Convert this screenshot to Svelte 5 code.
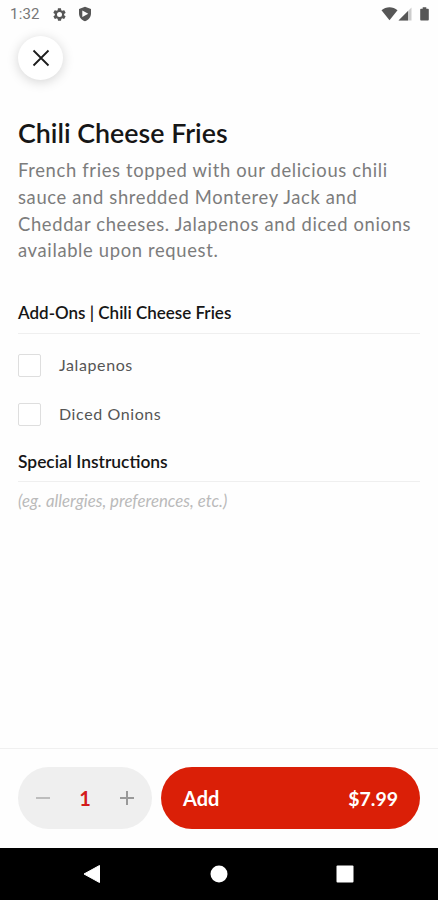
<script lang="ts">
  type AddOn = { name: string; checked: boolean };

  let addOns = $state<AddOn[]>([
    { name: 'Jalapenos', checked: false },
    { name: 'Diced Onions', checked: false },
  ]);
  let instructions = $state('');
  let quantity = $state(1);

  const price = 7.99;
  let total = $derived((price * quantity).toFixed(2));
</script>

<div class="screen">
  <div class="status-bar">
    <span class="clock">1:32</span>
    <svg class="gear" width="15" height="15" viewBox="0 0 24 24">
      <path fill-rule="evenodd" d="M19.4 13c.1-.7.1-1.300 0-2l2.100-1.600c.2-.2.300-.4.1-.7l-2-3.400c-.1-.3-.4-.3-.6-.3l-2.500 1c-.5-.4-1.100-.7-1.700-1l-.4-2.600c0-.3-.2-.4-.5-.4h-4c-.3 0-.5.1-.5.4L9.100 5c-.6.3-1.200.6-1.700 1l-2.500-1c-.2 0-.5 0-.6.3l-2 3.400c-.1.3 0 .5.1.7L4.600 11c-.1.700-.1 1.300 0 2l-2.200 1.600c-.1.2-.2.4-.1.700l2 3.400c.1.3.4.3.6.3l2.500-1c.5.4 1.100.7 1.700 1l.4 2.600c0 .3.2.4.5.4h4c.3 0 .5-.1.5-.4l.4-2.600c.6-.3 1.200-.6 1.700-1l2.500 1c.2 0 .5 0 .6-.3l2-3.400c.2-.3.1-.5-.1-.7zM12 16a4 4 0 1 1 0-8 4 4 0 0 1 0 8z" />
    </svg>
    <svg class="shield" width="16" height="16" viewBox="0 0 16 16">
      <path fill-rule="evenodd" d="M8 .8 14 3v4.600c0 3.600-2.400 6.500-6 7.700-3.600-1.200-6-4.100-6-7.700V3zM5.300 4.500v6.600L11.300 7.800z" />
    </svg>
    <div class="signals">
      <svg width="17" height="14" viewBox="0 0 17 14">
        <path d="M.5 3.200C5-.7 12-.7 16.500 3.200L8.500 13.300z" />
      </svg>
      <svg width="14" height="14" viewBox="0 0 14 14">
        <path class="faint" d="M13.500.5v13H.5z" />
        <path d="M10 4v9.500H.5z" />
      </svg>
      <svg class="battery" width="9" height="14" viewBox="0 0 9 14">
        <path d="M2.700.3h3.600v1.500h1.700q.8 0 .8.800v10q0 1-.8 1H1q-.8 0-.8-1v-10q0-.8.8-.8h1.700z" />
      </svg>
    </div>
  </div>

  <button class="close" aria-label="Close">
    <svg width="18" height="18" viewBox="0 0 18 18">
      <path d="M1.500 1.500l15 15M16.500 1.500l-15 15" />
    </svg>
  </button>

  <main>
    <h1>Chili Cheese Fries</h1>
    <p class="description">
      French fries topped with our delicious chili sauce and shredded Monterey Jack and Cheddar
      cheeses. Jalapenos and diced onions available upon request.
    </p>

    <h2>Add-Ons | Chili Cheese Fries</h2>
    <div class="add-ons">
      {#each addOns as addOn}
        <label>
          <input type="checkbox" bind:checked={addOn.checked} />
          <span>{addOn.name}</span>
        </label>
      {/each}
    </div>

    <h2 class="special">Special Instructions</h2>
    <input
      class="instructions"
      type="text"
      placeholder="(eg. allergies, preferences, etc.)"
      bind:value={instructions}
    />
  </main>

  <footer>
    <div class="stepper">
      <button class="minus" aria-label="Remove one" onclick={() => (quantity = Math.max(1, quantity - 1))}>
        <svg width="14" height="14" viewBox="0 0 14 14"><path d="M0 7h14" /></svg>
      </button>
      <span class="quantity">{quantity}</span>
      <button class="plus" aria-label="Add one" onclick={() => (quantity += 1)}>
        <svg width="14" height="14" viewBox="0 0 14 14"><path d="M0 7h14M7 0v14" /></svg>
      </button>
    </div>
    <button class="add">
      <span>Add</span>
      <span class="total">${total}</span>
    </button>
  </footer>

  <nav>
    <svg width="18" height="20" viewBox="0 0 18 20">
      <path stroke="#fff" stroke-linejoin="round" d="M16.500 1.500v17L1 10z" />
    </svg>
    <svg width="18" height="20" viewBox="0 0 18 20">
      <circle cx="9" cy="10" r="8.500" />
    </svg>
    <svg width="18" height="20" viewBox="0 0 18 20">
      <rect x=".5" y="1.500" width="17" height="17" rx="1" />
    </svg>
  </nav>
</div>

<style>
  :global(body) {
    background: #fefefe;
  }

  .screen {
    display: flex;
    flex-direction: column;
    width: 438px;
    height: 900px;
    overflow: hidden;
    background: #fefefe;
    color: #161616;
    font-family: Lato, "Liberation Sans", sans-serif;
  }

  button {
    padding: 0;
    border: none;
    background: none;
    font-family: inherit;
    cursor: pointer;
  }

  svg {
    display: block;
    flex: none;
  }

  .status-bar {
    display: flex;
    align-items: center;
    height: 28px;
    padding: 0 9px 0 10px;
    fill: #565656;
  }

  .clock {
    width: 42px;
    color: #777;
    font-family: Roboto, sans-serif;
    font-size: 15px;
    letter-spacing: 0.2px;
  }

  .shield {
    margin-left: 10px;
  }

  .signals {
    display: flex;
    margin-left: auto;
  }

  .battery {
    margin-left: 8px;
  }

  .faint {
    fill: #ccc;
  }

  .close {
    display: flex;
    align-items: center;
    justify-content: center;
    flex: none;
    width: 45px;
    height: 44px;
    margin: 8px 0 0 18px;
    border-radius: 50%;
    background: #fff;
    box-shadow: 0 2px 12px rgba(0, 0, 0, 0.17);
  }

  .close path {
    stroke: #1c1c1c;
    stroke-width: 1.8;
  }

  main {
    flex: 1;
    padding: 37px 18px 0;
  }

  h1 {
    margin: 0;
    font-size: 26.8px;
    font-weight: 600;
    line-height: 32px;
  }

  .description {
    margin: 8px 0 0;
    color: #7c7c7c;
    font-size: 18.4px;
    line-height: 26.8px;
    letter-spacing: 0.65px;
  }

  h2 {
    margin: 0;
    padding-bottom: 10px;
    border-bottom: 1px solid #efefef;
    font-size: 17px;
    font-weight: 600;
    line-height: 20px;
  }

  .description + h2 {
    margin-top: 39px;
  }

  .special {
    padding-bottom: 9px;
    font-size: 17.4px;
  }

  .add-ons {
    display: flex;
    flex-direction: column;
    gap: 26px;
    padding: 20px 0 26px;
  }

  label {
    display: flex;
    align-items: center;
    gap: 18px;
    color: #555;
    font-size: 16px;
    letter-spacing: 0.6px;
  }

  label span {
    padding-bottom: 2px;
    line-height: 21px;
  }

  label input {
    appearance: none;
    width: 23px;
    height: 23px;
    margin: 0;
    border: 1px solid #dedede;
    border-radius: 2px;
    background: #fff;
  }

  label input:checked {
    background: #da1f07;
  }

  .instructions {
    display: block;
    box-sizing: border-box;
    width: 100%;
    height: 37px;
    padding: 0;
    border: none;
    outline: none;
    background: none;
    font-family: inherit;
    font-size: 16.8px;
    font-style: italic;
  }

  .instructions::placeholder {
    color: #bababa;
  }

  footer {
    display: flex;
    gap: 9px;
    box-sizing: border-box;
    height: 100px;
    padding: 18px 18px 19px;
    border-top: 1px solid #f0f0f0;
  }

  .stepper {
    display: flex;
    align-items: center;
    justify-content: space-between;
    box-sizing: border-box;
    width: 134px;
    height: 62px;
    padding: 0 18px;
    border-radius: 31px;
    background: #efefef;
  }

  .stepper path {
    stroke: #bdbdbd;
    stroke-width: 2;
  }

  .stepper .plus path {
    stroke: #999;
  }

  .quantity {
    color: #d31b1b;
    font-size: 20px;
    font-weight: 700;
  }

  .add {
    display: flex;
    flex: 1;
    align-items: center;
    justify-content: space-between;
    height: 62px;
    padding: 0 22px;
    border-radius: 31px;
    background: #da1f07;
    color: #fff;
    font-size: 20px;
    font-weight: 700;
  }

  .total {
    font-size: 19.5px;
  }

  nav {
    display: flex;
    align-items: center;
    justify-content: space-between;
    box-sizing: border-box;
    height: 52px;
    padding: 0 84px 0 83px;
    background: #000;
    fill: #fff;
  }
</style>
